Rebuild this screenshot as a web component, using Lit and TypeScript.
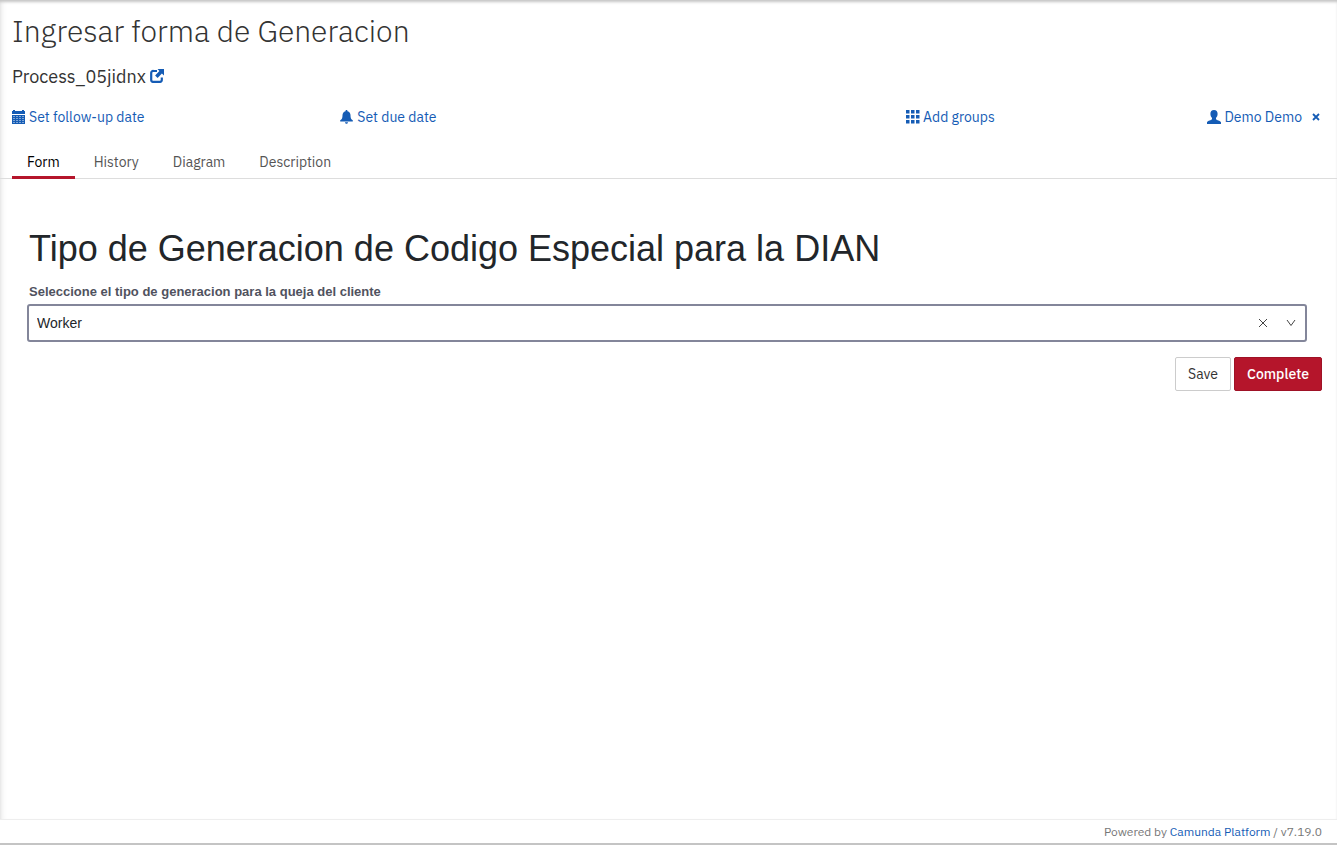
import { LitElement, html, css, svg } from "lit";
import { customElement, state } from "lit/decorators.js";

const TABS = ["Form", "History", "Diagram", "Description"];

const externalIcon = html`<svg class="icon external" viewBox="0 0 14 14" aria-hidden="true">
  <path d="M7 2H3.500A2 2 0 0 0 1.200 4.200V10.700A2 2 0 0 0 3.500 12.900H9.500A2 2 0 0 0 11.800 10.700V8.500" fill="none" stroke="currentColor" stroke-width="2.200"/>
  <path d="M7.500 0H14V6.500L11.900 4.600L7.600 8.900L5.100 6.400L9.400 2.100Z" fill="currentColor"/>
</svg>`;

const calendarIcon = html`<svg class="icon" viewBox="0 0 14 14" aria-hidden="true">
  <path d="M0 1H1V0H3V1H10V0H12V1H13V4H0Z" fill="currentColor"/>
  <path d="M0 5H13V14H0Z" fill="currentColor"/>
  <path d="M1 6.500H12M1 8.500H12M1 10.500H12M1 12.500H12" stroke="#fff" stroke-width="1" stroke-dasharray="2 1" fill="none" opacity=".45"/>
</svg>`;

const bellIcon = html`<svg class="icon" viewBox="0 0 14 14" aria-hidden="true">
  <path d="M6.500 0C7.200 0 7.500 .500 7.500 1.200C9.500 1.700 10.500 3.300 10.500 5.200C10.500 8 11 9.200 12.800 10.300V11.500H.200V10.300C2 9.200 2.500 8 2.500 5.200C2.500 3.300 3.500 1.700 5.500 1.200C5.500 .500 5.800 0 6.500 0ZM5 12.300H8C8 13.200 7.400 13.800 6.500 13.800S5 13.200 5 12.300Z" fill="currentColor"/>
</svg>`;

const gridIcon = html`<svg class="icon" viewBox="0 0 14 14" aria-hidden="true">
  ${[0, 5, 10].map((y) =>
    [0, 5, 10].map((x) => svg`<rect x=${x} y=${y} width="3.500" height="3.500" fill="currentColor"></rect>`)
  )}
</svg>`;

const userIcon = html`<svg class="icon" viewBox="0 0 14 14" aria-hidden="true">
  <path d="M7 0C9.400 0 10.600 1.600 10.600 3.800C10.600 5.600 10 7 9 7.900V9.300C9.300 10.200 13.400 10.700 14 12.300V14H0V12.300C.600 10.700 4.700 10.200 5 9.300V7.900C4 7 3.400 5.600 3.400 3.800C3.400 1.600 4.600 0 7 0Z" fill="currentColor"/>
</svg>`;

const removeIcon = html`<svg class="remove-icon" viewBox="0 0 8 8" aria-hidden="true">
  <path d="M1 1L7 7M7 1L1 7" stroke="currentColor" stroke-width="1.800"/>
</svg>`;

const clearIcon = html`<svg class="select-icon" viewBox="0 0 10 10" aria-hidden="true">
  <path d="M1 1L9 9M9 1L1 9" stroke="currentColor" fill="none"/>
</svg>`;

const chevronIcon = html`<svg class="select-icon" viewBox="0 0 10 10" aria-hidden="true">
  <path d="M1 2L5 7.500L9 2" stroke="currentColor" fill="none"/>
</svg>`;

@customElement("app-root")
export class AppRoot extends LitElement {
  static styles = css`
    :host {
      display: flex;
      flex-direction: column;
      min-height: 100vh;
      box-sizing: border-box;
      border-bottom: 2px solid #c4c4c4;
      background: #fff;
      color: #333;
      font: 14px/20px "IBM Plex Sans", Roboto, sans-serif;
    }
    *, *::before, *::after { box-sizing: border-box; }
    a { color: #155cb5; text-decoration: none; }
    button { font: inherit; cursor: pointer; }
    .task {
      flex: 1;
      box-shadow: inset 0 3px 3px -1px #c4c4c4, inset 6px 0 6px -5px #e4e4e4;
    }
    .header { padding: 12px 12px 0; }
    .title { margin: 0; font-size: 30px; font-weight: 300; line-height: 38px; }
    .process { margin: 15px 0 0; font-size: 18px; font-weight: 400; line-height: 24px; }
    .icon { width: 14px; height: 14px; flex: none; }
    .meta {
      display: grid;
      grid-template-columns: repeat(4, 1fr);
      margin-top: 18px;
    }
    .cell { display: flex; align-items: center; gap: 7px; }
    .end { justify-content: flex-end; padding-right: 2px; }
    .action {
      display: inline-flex;
      align-items: center;
      gap: 3px;
      padding: 0;
      border: 0;
      background: none;
      color: #155cb5;
    }
    .remove { padding: 0 3px; }
    .remove-icon { width: 8px; height: 8px; }
    .tabs {
      display: flex;
      gap: 4px;
      margin-top: 18px;
      padding: 0 12px;
      border-bottom: 1px solid #ddd;
    }
    .tab {
      margin-bottom: -1px;
      padding: 7px 15px 4px;
      border: 0;
      border-bottom: 3px solid transparent;
      background: none;
      color: #555;
    }
    .tab.active { border-color: #b5152b; color: #000; }
    .form { padding: 48px 30px 0 27px; font-family: "Liberation Sans", Arial, sans-serif; }
    .form-title { margin: 0; padding: 0 2px; color: #22262a; font-size: 36px; font-weight: 400; line-height: 44px; }
    .label {
      display: block;
      margin: 12px 0 3px;
      padding: 0 2px;
      color: #50525e;
      font-size: 13px;
      font-weight: 700;
      line-height: 18px;
    }
    .select-box {
      display: grid;
      grid-template-columns: 1fr 28px 28px;
      align-items: center;
      justify-items: center;
      height: 38px;
      border: 2px solid #83869a;
      border-radius: 3px;
      color: #444;
    }
    .select {
      grid-area: 1 / 1 / 2 / 4;
      width: 100%;
      height: 100%;
      padding: 0 8px;
      border: 0;
      appearance: none;
      background: transparent;
      color: #22262a;
      font: 14px "Liberation Sans", Arial, sans-serif;
    }
    .clear { grid-area: 1 / 2; display: flex; padding: 4px; border: 0; background: none; color: inherit; }
    .chevron { grid-area: 1 / 3; display: flex; pointer-events: none; }
    .select-icon { width: 10px; height: 10px; }
    .buttons { display: flex; justify-content: flex-end; gap: 3px; padding: 15px 15px 0; }
    .button {
      height: 34px;
      padding: 0 12px;
      border: 1px solid #ccc;
      border-radius: 2px;
      background: #fff;
      color: #333;
    }
    .primary { border-color: #9f1226; background: #b5152b; color: #fff; font-weight: 500; }
    .footer {
      padding: 3px 15px 2px;
      border-top: 1px solid #eee;
      color: #777;
      font-size: 12px;
      line-height: 18px;
      text-align: right;
    }
  `;

  @state() private activeTab = "Form";
  @state() private generation = "Worker";

  render() {
    return html`
      <main class="task">
        <header class="header">
          <h1 class="title">Ingresar forma de Generacion</h1>
          <h2 class="process">Process_05jidnx <a href="#" aria-label="Open process">${externalIcon}</a></h2>
          <div class="meta">
            <div class="cell"><button class="action">${calendarIcon}<span>Set follow-up date</span></button></div>
            <div class="cell"><button class="action">${bellIcon}<span>Set due date</span></button></div>
            <div class="cell end"><button class="action">${gridIcon}<span>Add groups</span></button></div>
            <div class="cell end">
              <button class="action">${userIcon}<span>Demo Demo</span></button>
              <button class="action remove" aria-label="Remove assignee">${removeIcon}</button>
            </div>
          </div>
        </header>
        <nav class="tabs" role="tablist">
          ${TABS.map(
            (tab) => html`<button
              class="tab ${tab === this.activeTab ? "active" : ""}"
              role="tab"
              aria-selected=${tab === this.activeTab}
              @click=${() => (this.activeTab = tab)}
            >${tab}</button>`
          )}
        </nav>
        <section class="form">
          <h1 class="form-title">Tipo de Generacion de Codigo Especial para la DIAN</h1>
          <label class="label" for="generation">Seleccione el tipo de generacion para la queja del cliente</label>
          <div class="select-box">
            <select
              class="select"
              id="generation"
              .value=${this.generation}
              @change=${(e: Event) => (this.generation = (e.target as HTMLSelectElement).value)}
            >
              <option>Worker</option>
            </select>
            <button class="clear" aria-label="Clear" @click=${() => (this.generation = "")}>${clearIcon}</button>
            <span class="chevron">${chevronIcon}</span>
          </div>
        </section>
        <div class="buttons">
          <button class="button">Save</button>
          <button class="button primary">Complete</button>
        </div>
      </main>
      <footer class="footer">Powered by <a href="#">Camunda Platform</a> / v7.19.0</footer>
    `;
  }
}
